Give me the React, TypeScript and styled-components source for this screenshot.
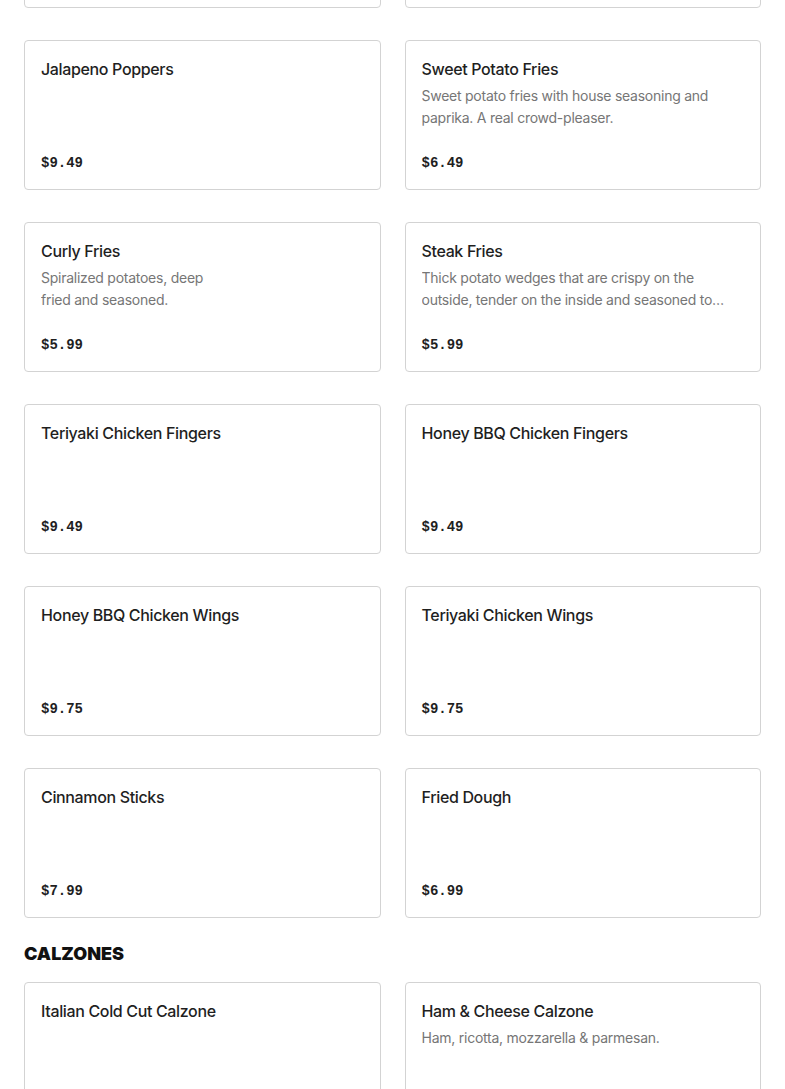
import React from 'react';
import styled, { createGlobalStyle } from 'styled-components';

const GlobalStyle = createGlobalStyle`
  html, body {
    margin: 0;
    padding: 0;
    background: #ffffff;
    overflow: hidden;
  }
  * {
    box-sizing: border-box;
  }
`;

const Page = styled.div`
  padding: 0 24px;
  font-family: "Inter", "Liberation Sans", sans-serif;
  color: #222222;
`;

const Grid = styled.div<{ $offset?: number }>`
  display: grid;
  grid-template-columns: 1fr 1fr;
  column-gap: 24px;
  row-gap: 32px;
  margin-top: ${(p) => p.$offset ?? 0}px;
`;

const Card = styled.div`
  height: 150px;
  border: 1px solid #d3d3d3;
  border-radius: 4px;
  padding: 16px 16px 15px;
  display: flex;
  flex-direction: column;
  background: #fff;
`;

const Title = styled.h3`
  margin: 0;
  font-size: 16px;
  line-height: 24px;
  font-weight: 500;
  letter-spacing: -0.35px;
  color: #1f1f1f;
`;

const Desc = styled.p`
  margin: 4px 0 0;
  font-size: 14px;
  line-height: 22px;
  letter-spacing: -0.25px;
  color: #767676;
  display: -webkit-box;
  -webkit-line-clamp: 2;
  -webkit-box-orient: vertical;
  overflow: hidden;
`;

const Price = styled.span`
  margin-top: auto;
  font-family: "Liberation Mono", "DejaVu Sans Mono", monospace;
  font-weight: 700;
  font-size: 14px;
  line-height: 22px;
  color: #1f1f1f;
`;

const Section = styled.h2`
  margin: 24px 0 16px;
  font-family: "Inter", "Liberation Sans", sans-serif;
  font-weight: 900;
  font-size: 18px;
  line-height: 24px;
  color: #111;
`;

interface Item {
  name: string;
  desc?: React.ReactNode;
  price: string;
}

const sides: Item[] = [
  { name: '', price: '' },
  { name: '', price: '' },
  { name: 'Jalapeno Poppers', price: '$9.49' },
  {
    name: 'Sweet Potato Fries',
    desc: 'Sweet potato fries with house seasoning and paprika. A real crowd-pleaser.',
    price: '$6.49',
  },
  {
    name: 'Curly Fries',
    desc: (
      <>
        Spiralized potatoes, deep
        <br />
        fried and seasoned.
      </>
    ),
    price: '$5.99',
  },
  {
    name: 'Steak Fries',
    desc: 'Thick potato wedges that are crispy on the outside, tender on the inside and seasoned to perfection.',
    price: '$5.99',
  },
  { name: 'Teriyaki Chicken Fingers', price: '$9.49' },
  { name: 'Honey BBQ Chicken Fingers', price: '$9.49' },
  { name: 'Honey BBQ Chicken Wings', price: '$9.75' },
  { name: 'Teriyaki Chicken Wings', price: '$9.75' },
  { name: 'Cinnamon Sticks', price: '$7.99' },
  { name: 'Fried Dough', price: '$6.99' },
];

const calzones: Item[] = [
  { name: 'Italian Cold Cut Calzone', price: '$12.99' },
  { name: 'Ham & Cheese Calzone', desc: 'Ham, ricotta, mozzarella & parmesan.', price: '$12.99' },
];

function MenuCard({ item }: { item: Item }) {
  return (
    <Card>
      <Title>{item.name}</Title>
      {item.desc && <Desc>{item.desc}</Desc>}
      <Price>{item.price}</Price>
    </Card>
  );
}

export default function App() {
  return (
    <>
      <GlobalStyle />
      <Page>
        <Grid $offset={-142}>
          {sides.map((s, i) => (
            <MenuCard key={i} item={s} />
          ))}
        </Grid>
        <Section>CALZONES</Section>
        <Grid>
          {calzones.map((c, i) => (
            <MenuCard key={i} item={c} />
          ))}
        </Grid>
      </Page>
    </>
  );
}
